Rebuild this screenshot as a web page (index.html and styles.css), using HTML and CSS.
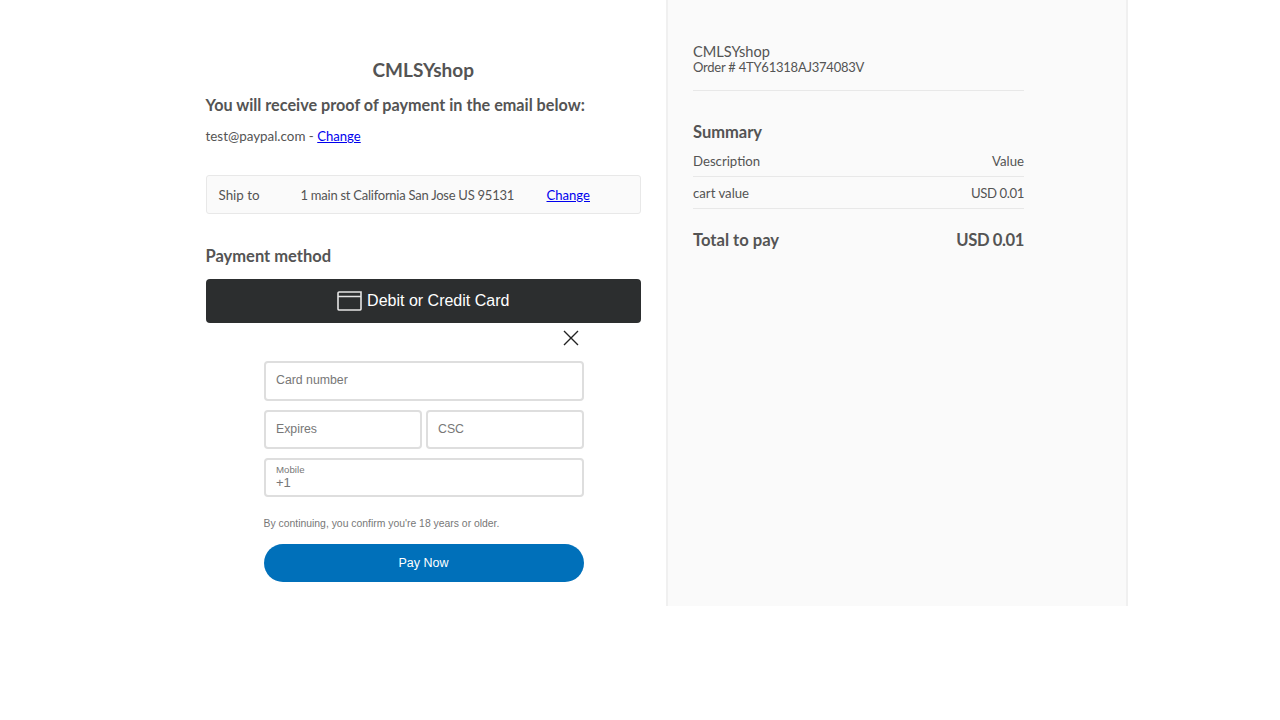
FILE: index.html
```html
<!DOCTYPE html>
<html lang="en">
  <head>
    <meta charset="UTF-8" />
    <title>CMLSYshop checkout</title>
    <link rel="stylesheet" href="styles.css">
  </head>
  <body>
    <div class="page">
      <div class="main">
        <h1 class="shop_title">CMLSYshop</h1>
        <h2 class="proof">You will receive proof of payment in the email below:</h2>
        <p class="email">test@paypal.com - <a href="#">Change</a></p>

        <div class="ship">
          <span class="ship_label">Ship to</span>
          <span class="ship_address">1 main st California San Jose US 95131</span>
          <a href="#">Change</a>
        </div>

        <h2 class="method">Payment method</h2>
        <button class="card_button">
          <svg class="card_icon" width="25" height="20" viewBox="0 0 25 20" fill="none" stroke="#e4e4e4" stroke-width="1.6">
            <path d="M24 5.5H1V2.2A1.2 1.2 0 0 1 2.2 1H24V18A1.2 1.2 0 0 1 22.8 19H2.2A1.2 1.2 0 0 1 1 18V5.5" />
          </svg>
          Debit or Credit Card
        </button>

        <div class="close_row">
          <svg width="16" height="16" viewBox="0 0 16 16" stroke="#222" stroke-width="1.4">
            <path d="M1 1L15 15M15 1L1 15" />
          </svg>
        </div>

        <form class="card_form">
          <div class="field field_card">Card number</div>
          <div class="field_row">
            <div class="field field_half">Expires</div>
            <div class="field field_half">CSC</div>
          </div>
          <div class="field field_mobile">
            <span class="mobile_label">Mobile</span>
            <span class="mobile_value">+1</span>
          </div>
          <p class="age_note">By continuing, you confirm you're 18 years or older.</p>
          <button class="pay_button" type="button">Pay Now</button>
        </form>
      </div>

      <div class="side">
        <div class="order">
          <div class="order_shop">CMLSYshop</div>
          <div class="order_id">Order # 4TY61318AJ374083V</div>
        </div>
        <h2 class="summary">Summary</h2>
        <div class="row row_line"><span>Description</span><span>Value</span></div>
        <div class="row row_line"><span>cart value</span><span class="money">USD 0.01</span></div>
        <div class="row total"><span>Total to pay</span><span class="money">USD 0.01</span></div>
      </div>
    </div>
  </body>
</html>
```

FILE: styles.css
```css
html {
  top: 0;
}
body {
  margin: 0;
  background: #fff;
  color: #545454;
  font-family: "Lato", sans-serif;
}
a {
  color: #0000ee;
}
.page {
  display: flex;
  height: 606px;
  padding-left: 205.5px;
}
.main {
  width: 435.5px;
}
.shop_title {
  margin: 58px 0 0;
  font-size: 19px;
  line-height: 24px;
  font-weight: 700;
  text-align: center;
}
.proof {
  margin: 12px 0 0;
  font-size: 16.2px;
  line-height: 22px;
  font-weight: 700;
}
.email {
  margin: 10px 0 0;
  font-size: 13.4px;
  line-height: 20px;
}
.email a {
  font-size: 13.1px;
}
.ship {
  display: flex;
  align-items: center;
  height: 37px;
  margin-top: 29px;
  padding-left: 12px;
  background: #fafafa;
  border: 1px solid #e8e8e8;
  border-radius: 3px;
  font-size: 13.4px;
}
.ship_label {
  width: 82px;
}
.ship_address {
  width: 246px;
  font-size: 13px;
  letter-spacing: -0.25px;
}
.ship a {
  font-size: 13.1px;
}
.method {
  margin: 31px 0 0;
  font-size: 16.5px;
  line-height: 22px;
  font-weight: 700;
}
.card_button {
  display: flex;
  align-items: center;
  justify-content: center;
  gap: 5px;
  width: 100%;
  height: 44px;
  margin-top: 12px;
  border: none;
  border-radius: 4px;
  background: #2c2e2f;
  color: #fff;
  font-family: "Liberation Sans", sans-serif;
  font-size: 16px;
}
.close_row {
  display: flex;
  justify-content: flex-end;
  height: 16px;
  margin-top: 7px;
  padding-right: 62px;
}
.card_form {
  width: 320px;
  margin: 15px 0 0 58px;
  font-family: "Liberation Sans", sans-serif;
}
.field {
  box-sizing: border-box;
  display: flex;
  align-items: center;
  padding: 0 0 2px 10.5px;
  border: 2px solid #dedede;
  border-radius: 4px;
  background: #fff;
  color: #777;
  font-size: 12.3px;
}
.field_card {
  height: 40px;
}
.field_row {
  display: flex;
  gap: 4px;
  margin-top: 9px;
}
.field_half {
  width: 158px;
  height: 39px;
}
.field_mobile {
  flex-direction: column;
  align-items: flex-start;
  justify-content: center;
  height: 39px;
  margin-top: 9px;
}
.mobile_label {
  font-size: 9.7px;
  line-height: 12px;
}
.mobile_value {
  font-size: 13px;
  line-height: 14px;
}
.age_note {
  margin: 20px 0 0;
  font-size: 10.4px;
  line-height: 14px;
  color: #777;
}
.pay_button {
  width: 100%;
  height: 38px;
  margin-top: 13px;
  border: none;
  border-radius: 19px;
  background: #0070ba;
  color: #fff;
  font-family: "Liberation Sans", sans-serif;
  font-size: 12.5px;
}
.side {
  box-sizing: border-box;
  width: 462px;
  margin-left: 25px;
  padding: 44px 102px 0 25px;
  background: #fafafa;
  border-left: 2px solid #f0f0f0;
  border-right: 2px solid #f0f0f0;
  font-size: 13.2px;
}
.order {
  padding-bottom: 15px;
  border-bottom: 1px solid #e8e8e8;
  line-height: 15px;
}
.order_shop {
  font-size: 14.6px;
}
.order_id {
  margin-top: 1px;
  font-size: 13px;
  letter-spacing: -0.23px;
}
.summary {
  margin: 30px 0 2px;
  font-size: 16.5px;
  line-height: 22px;
  font-weight: 700;
}
.row {
  display: flex;
  justify-content: space-between;
}
.row_line {
  height: 31px;
  align-items: center;
  border-bottom: 1px solid #e8e8e8;
}
.money {
  letter-spacing: -0.4px;
}
.total {
  margin-top: 20px;
  font-size: 16.6px;
  line-height: 22px;
  font-weight: 700;
}
```
